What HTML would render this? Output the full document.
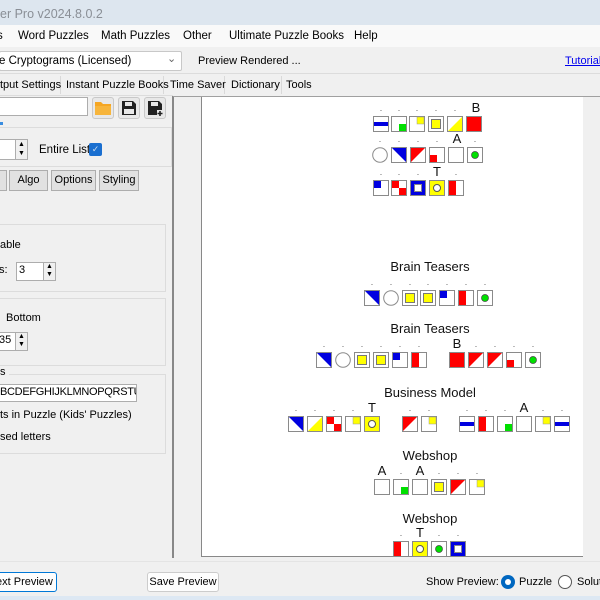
<!DOCTYPE html>
<html><head><meta charset="utf-8"><style>
*{box-sizing:border-box;margin:0;padding:0}
body{width:600px;height:600px;overflow:hidden;background:#f0f0f0;font-family:"Liberation Sans",Arial,sans-serif;font-size:11px;color:#000;position:relative}
.a{position:absolute;white-space:nowrap}
.btn{position:absolute;background:#e1e1e1;border:1px solid #adadad;text-align:center;line-height:19px}
.tb{position:absolute;background:#fff;border:1px solid #7a7a7a}
.spin{position:absolute;width:13px;border:1px solid #adadad;background:#f0f0f0}
.grp{position:absolute;border:1px solid #dcdcdc}
.m{font-size:11.5px;top:30px}
</style></head><body>
<div class="a" style="left:0;top:0;width:600px;height:25px;background:#dde6ef"></div>
<div class="a" style="left:0;top:7px;color:#8a8f96;font-size:12.5px">er Pro v2024.8.0.2</div>
<div class="a" style="left:0;top:25px;width:600px;height:22px;background:#f9f9f9"></div>
<div class="a m" style="left:-3px">s</div>
<div class="a m" style="left:18px">Word Puzzles</div>
<div class="a m" style="left:101px">Math Puzzles</div>
<div class="a m" style="left:183px">Other</div>
<div class="a m" style="left:229px">Ultimate Puzzle Books</div>
<div class="a m" style="left:354px">Help</div>
<div class="a" style="left:-1px;top:51px;width:183px;height:20px;background:#fff;border:1px solid #c8c8c8;border-radius:2px"></div>
<div class="a" style="left:-1px;top:55px;font-size:11.5px">e Cryptograms (Licensed)</div>
<div class="a" style="left:167px;top:52px;color:#666">&#8964;</div>
<div class="a" style="left:198px;top:55px">Preview Rendered ...</div>
<div class="a" style="left:565px;top:55px;color:#0000ee;text-decoration:underline">Tutorials</div>
<div class="a" style="left:0;top:73px;width:600px;height:1px;background:#dcdcdc"></div>
<div class="a" style="left:60px;top:76px;width:1px;height:18px;background:#d9d9d9"></div>
<div class="a" style="left:163px;top:76px;width:1px;height:18px;background:#d9d9d9"></div>
<div class="a" style="left:224px;top:76px;width:1px;height:18px;background:#d9d9d9"></div>
<div class="a" style="left:281px;top:76px;width:1px;height:18px;background:#d9d9d9"></div>
<div class="a" style="left:0;top:79px">tput Settings</div>
<div class="a" style="left:66px;top:79px">Instant Puzzle Books</div>
<div class="a" style="left:170px;top:79px">Time Saver</div>
<div class="a" style="left:231px;top:79px">Dictionary</div>
<div class="a" style="left:286px;top:79px">Tools</div>
<div class="a" style="left:0;top:95px;width:173px;height:1px;background:#dcdcdc"></div>
<!-- left panel -->
<div class="tb" style="left:-2px;top:97px;width:90px;height:19px;border-color:#adadad"></div>
<div class="a" style="left:92px;top:97px;width:22px;height:22px;border:1px solid #c8c8c8;border-radius:3px;background:#e8e8e8"></div>
<svg class="a" style="left:94px;top:100px" width="18" height="16"><path d="M1 2h6l2 2h8v11H1z" fill="#f5a623"/><path d="M1 6h16v9H1z" fill="#f7b53c"/></svg>
<div class="a" style="left:118px;top:97px;width:22px;height:22px;border:1px solid #c8c8c8;border-radius:3px;background:#e8e8e8"></div>
<svg class="a" style="left:121px;top:100px" width="16" height="16"><path d="M1 1h11l3 3v11H1z" fill="#222"/><rect x="4" y="2" width="7" height="4" fill="#e8e8e8"/><rect x="3" y="9" width="10" height="5" fill="#e8e8e8"/></svg>
<div class="a" style="left:144px;top:97px;width:22px;height:22px;border:1px solid #c8c8c8;border-radius:3px;background:#e8e8e8"></div>
<svg class="a" style="left:147px;top:100px" width="17" height="17"><path d="M1 1h11l3 3v6h-5v5H1z" fill="#222"/><rect x="4" y="2" width="7" height="4" fill="#e8e8e8"/><path d="M13 11v5M10.5 13.5h5" stroke="#222" stroke-width="1.6"/></svg>
<div class="a" style="left:0;top:122px;width:3px;height:3px;background:#3a8de0"></div>
<div class="grp" style="left:-2px;top:127px;width:174px;height:40px"></div>
<div class="tb" style="left:-2px;top:139px;width:18px;height:21px;border-color:#adadad"></div>
<div class="spin" style="left:15px;top:139px;height:21px"></div>
<div class="a" style="left:18px;top:141px;font-size:7px">&#9650;</div><div class="a" style="left:18px;top:150px;font-size:7px">&#9660;</div>
<div class="a" style="left:39px;top:144px;font-size:11.5px">Entire List</div>
<div class="a" style="left:89px;top:143px;width:13px;height:13px;background:#1a6fd0;border-radius:2px;color:#cde;font-size:9px;text-align:center;line-height:13px">&#10003;</div>
<div class="btn" style="left:-2px;top:170px;width:9px;height:21px"></div>
<div class="btn" style="left:9px;top:170px;width:39px;height:21px">Algo</div>
<div class="btn" style="left:51px;top:170px;width:45px;height:21px">Options</div>
<div class="btn" style="left:99px;top:170px;width:40px;height:21px">Styling</div>
<div class="grp" style="left:-2px;top:224px;width:168px;height:68px"></div>
<div class="a" style="left:0;top:239px">able</div>
<div class="a" style="left:-1px;top:264px">s:</div>
<div class="tb" style="left:16px;top:262px;width:28px;height:19px;border-color:#adadad;padding:1px 2px">3</div>
<div class="spin" style="left:43px;top:262px;height:19px"></div>
<div class="a" style="left:46px;top:263px;font-size:7px">&#9650;</div><div class="a" style="left:46px;top:271px;font-size:7px">&#9660;</div>
<div class="grp" style="left:-2px;top:298px;width:168px;height:68px"></div>
<div class="a" style="left:6px;top:312px">Bottom</div>
<div class="tb" style="left:-2px;top:332px;width:18px;height:19px;border-color:#adadad;padding:1px 0">35</div>
<div class="spin" style="left:15px;top:332px;height:19px"></div>
<div class="a" style="left:18px;top:333px;font-size:7px">&#9650;</div><div class="a" style="left:18px;top:341px;font-size:7px">&#9660;</div>
<div class="grp" style="left:-2px;top:374px;width:168px;height:80px"></div>
<div class="a" style="left:0;top:366px;background:#f0f0f0;padding-right:3px">s</div>
<div class="tb" style="left:-2px;top:384px;width:139px;height:18px;overflow:hidden;padding:1px 0 0 1px;border-color:#adadad;letter-spacing:-0.3px">BCDEFGHIJKLMNOPQRSTUV</div>
<div class="a" style="left:0;top:409px">ts in Puzzle (Kids' Puzzles)</div>
<div class="a" style="left:0;top:431px">sed letters</div>
<!-- preview -->
<div class="a" style="left:172px;top:96px;width:2px;height:462px;background:#888"></div>
<div class="a" style="left:173px;top:96px;width:427px;height:1px;background:#a0a0a0"></div>
<div class="a" style="left:201px;top:97px;width:382px;height:460px;background:#fff;border-left:1px solid #888;border-bottom:1px solid #888"></div>
<svg class="a" style="left:202px;top:97px" width="381" height="459" font-family="Liberation Sans,Arial,sans-serif">
<defs>
<symbol id="f" viewBox="0 0 16 16"><rect x=".5" y=".5" width="15" height="15" fill="#fff" stroke="#8a8a8a"/></symbol>
<symbol id="hb" viewBox="0 0 16 16"><use href="#f"/><rect x="1" y="6" width="14" height="4" fill="#0000e0"/></symbol>
<symbol id="gbr" viewBox="0 0 16 16"><use href="#f"/><rect x="8" y="8" width="7" height="7" fill="#00e000"/></symbol>
<symbol id="ytr" viewBox="0 0 16 16"><use href="#f"/><rect x="8" y="1" width="7" height="7" fill="#ffff00" stroke="#999" stroke-width=".5"/></symbol>
<symbol id="ysq" viewBox="0 0 16 16"><use href="#f"/><rect x="3.5" y="3.5" width="9" height="9" fill="#ffff00" stroke="#777"/></symbol>
<symbol id="ytri" viewBox="0 0 16 16"><use href="#f"/><polygon points="1,15 15,1 15,15" fill="#ffff00"/></symbol>
<symbol id="red" viewBox="0 0 16 16"><rect x=".5" y=".5" width="15" height="15" fill="#f00" stroke="#8a8a8a"/></symbol>
<symbol id="circ" viewBox="0 0 16 16"><circle cx="8" cy="8" r="7.3" fill="#fff" stroke="#8a8a8a"/></symbol>
<symbol id="btri" viewBox="0 0 16 16"><use href="#f"/><polygon points="1,1 15,1 15,15" fill="#0000e0"/></symbol>
<symbol id="rtri" viewBox="0 0 16 16"><use href="#f"/><polygon points="1,1 15,1 1,15" fill="#f00"/></symbol>
<symbol id="rbl" viewBox="0 0 16 16"><use href="#f"/><rect x="1" y="8" width="7" height="7" fill="#f00"/></symbol>
<symbol id="gdot" viewBox="0 0 16 16"><use href="#f"/><circle cx="8" cy="8" r="3.5" fill="#00e000" stroke="#444" stroke-width=".7"/></symbol>
<symbol id="btl" viewBox="0 0 16 16"><use href="#f"/><rect x="1" y="1" width="7" height="7" fill="#0000e0"/></symbol>
<symbol id="chk" viewBox="0 0 16 16"><use href="#f"/><rect x="1" y="1" width="7" height="7" fill="#f00"/><rect x="8" y="8" width="7" height="7" fill="#f00"/></symbol>
<symbol id="bfr" viewBox="0 0 16 16"><rect x=".5" y=".5" width="15" height="15" fill="#0000e0" stroke="#8a8a8a"/><rect x="4.5" y="4.5" width="7" height="7" fill="#fff" stroke="#888"/></symbol>
<symbol id="yr" viewBox="0 0 16 16"><rect x=".5" y=".5" width="15" height="15" fill="#ffff00" stroke="#8a8a8a"/><circle cx="8" cy="8" r="3.5" fill="#fff" stroke="#555"/></symbol>
<symbol id="rh" viewBox="0 0 16 16"><use href="#f"/><rect x="1" y="1" width="7" height="14" fill="#f00"/></symbol>
</defs>
<g transform="translate(-202,-97)" font-size="13" text-anchor="middle" fill="#111">
<g font-size="8" fill="#333">
<text x="381" y="111">.</text><text x="399" y="111">.</text><text x="417" y="111">.</text><text x="436" y="111">.</text><text x="455" y="111">.</text>
<text x="380" y="142">.</text><text x="399" y="142">.</text><text x="418" y="142">.</text><text x="437" y="142">.</text><text x="475" y="142">.</text>
<text x="381" y="175">.</text><text x="399" y="175">.</text><text x="418" y="175">.</text><text x="456" y="175">.</text>
<text x="372" y="285">.</text><text x="391" y="285">.</text><text x="410" y="285">.</text><text x="428" y="285">.</text><text x="447" y="285">.</text><text x="466" y="285">.</text><text x="485" y="285">.</text>
<text x="324" y="347">.</text><text x="343" y="347">.</text><text x="362" y="347">.</text><text x="381" y="347">.</text><text x="400" y="347">.</text><text x="419" y="347">.</text><text x="476" y="347">.</text><text x="495" y="347">.</text><text x="514" y="347">.</text><text x="533" y="347">.</text>
<text x="296" y="411">.</text><text x="315" y="411">.</text><text x="334" y="411">.</text><text x="353" y="411">.</text><text x="410" y="411">.</text><text x="429" y="411">.</text><text x="467" y="411">.</text><text x="486" y="411">.</text><text x="505" y="411">.</text><text x="543" y="411">.</text><text x="562" y="411">.</text>
<text x="401" y="474">.</text><text x="439" y="474">.</text><text x="458" y="474">.</text><text x="477" y="474">.</text>
<text x="401" y="536">.</text><text x="439" y="536">.</text><text x="458" y="536">.</text>
</g>
<text x="476" y="112">B</text><text x="457" y="143">A</text><text x="437" y="176">T</text>
<text x="457" y="348">B</text><text x="372" y="412">T</text><text x="524" y="412">A</text>
<text x="382" y="475">A</text><text x="420" y="475">A</text><text x="420" y="537">T</text>
<text x="430" y="271">Brain Teasers</text>
<text x="430" y="333">Brain Teasers</text>
<text x="430" y="397">Business Model</text>
<text x="430" y="460">Webshop</text>
<text x="430" y="523">Webshop</text>
<use href="#hb" x="373" y="116" width="16" height="16"/><use href="#gbr" x="391" y="116" width="16" height="16"/><use href="#ytr" x="409" y="116" width="16" height="16"/><use href="#ysq" x="428" y="116" width="16" height="16"/><use href="#ytri" x="447" y="116" width="16" height="16"/><use href="#red" x="466" y="116" width="16" height="16"/>
<use href="#circ" x="372" y="147" width="16" height="16"/><use href="#btri" x="391" y="147" width="16" height="16"/><use href="#rtri" x="410" y="147" width="16" height="16"/><use href="#rbl" x="429" y="147" width="16" height="16"/><use href="#f" x="448" y="147" width="16" height="16"/><use href="#gdot" x="467" y="147" width="16" height="16"/>
<use href="#btl" x="373" y="180" width="16" height="16"/><use href="#chk" x="391" y="180" width="16" height="16"/><use href="#bfr" x="410" y="180" width="16" height="16"/><use href="#yr" x="429" y="180" width="16" height="16"/><use href="#rh" x="448" y="180" width="16" height="16"/>
<use href="#btri" x="364" y="290" width="16" height="16"/><use href="#circ" x="383" y="290" width="16" height="16"/><use href="#ysq" x="402" y="290" width="16" height="16"/><use href="#ysq" x="420" y="290" width="16" height="16"/><use href="#btl" x="439" y="290" width="16" height="16"/><use href="#rh" x="458" y="290" width="16" height="16"/><use href="#gdot" x="477" y="290" width="16" height="16"/>
<use href="#btri" x="316" y="352" width="16" height="16"/><use href="#circ" x="335" y="352" width="16" height="16"/><use href="#ysq" x="354" y="352" width="16" height="16"/><use href="#ysq" x="373" y="352" width="16" height="16"/><use href="#btl" x="392" y="352" width="16" height="16"/><use href="#rh" x="411" y="352" width="16" height="16"/>
<use href="#red" x="449" y="352" width="16" height="16"/><use href="#rtri" x="468" y="352" width="16" height="16"/><use href="#rtri" x="487" y="352" width="16" height="16"/><use href="#rbl" x="506" y="352" width="16" height="16"/><use href="#gdot" x="525" y="352" width="16" height="16"/>
<use href="#btri" x="288" y="416" width="16" height="16"/><use href="#ytri" x="307" y="416" width="16" height="16"/><use href="#chk" x="326" y="416" width="16" height="16"/><use href="#ytr" x="345" y="416" width="16" height="16"/><use href="#yr" x="364" y="416" width="16" height="16"/>
<use href="#rtri" x="402" y="416" width="16" height="16"/><use href="#ytr" x="421" y="416" width="16" height="16"/>
<use href="#hb" x="459" y="416" width="16" height="16"/><use href="#rh" x="478" y="416" width="16" height="16"/><use href="#gbr" x="497" y="416" width="16" height="16"/><use href="#f" x="516" y="416" width="16" height="16"/><use href="#ytr" x="535" y="416" width="16" height="16"/><use href="#hb" x="554" y="416" width="16" height="16"/>
<use href="#f" x="374" y="479" width="16" height="16"/><use href="#gbr" x="393" y="479" width="16" height="16"/><use href="#f" x="412" y="479" width="16" height="16"/><use href="#ysq" x="431" y="479" width="16" height="16"/><use href="#rtri" x="450" y="479" width="16" height="16"/><use href="#ytr" x="469" y="479" width="16" height="16"/>
<use href="#rh" x="393" y="541" width="16" height="16"/><use href="#yr" x="412" y="541" width="16" height="16"/><use href="#gdot" x="431" y="541" width="16" height="16"/><use href="#bfr" x="450" y="541" width="16" height="16"/>
</g></svg>
<!-- bottom -->
<div class="a" style="left:0;top:561px;width:600px;height:1px;background:#e4e4e4"></div>
<div class="a" style="left:-5px;top:572px;width:62px;height:20px;background:#fdfdfd;border:1px solid #0078d7;border-radius:3px;line-height:18px;text-align:right;padding-right:4px">ext Preview</div>
<div class="a" style="left:147px;top:572px;width:72px;height:20px;background:#fdfdfd;border:1px solid #ccc;border-radius:3px;line-height:18px;text-align:center">Save Preview</div>
<div class="a" style="left:426px;top:576px">Show Preview:</div>
<div class="a" style="left:501px;top:575px;width:14px;height:14px;border-radius:50%;background:#0067c0"></div>
<div class="a" style="left:505px;top:579px;width:6px;height:6px;border-radius:50%;background:#fff"></div>
<div class="a" style="left:519px;top:576px">Puzzle</div>
<div class="a" style="left:558px;top:575px;width:14px;height:14px;border-radius:50%;border:1px solid #555;background:#fff"></div>
<div class="a" style="left:577px;top:576px">Soluti</div>
<div class="a" style="left:0;top:596px;width:600px;height:4px;background:#dde8f3"></div>
</body></html>
